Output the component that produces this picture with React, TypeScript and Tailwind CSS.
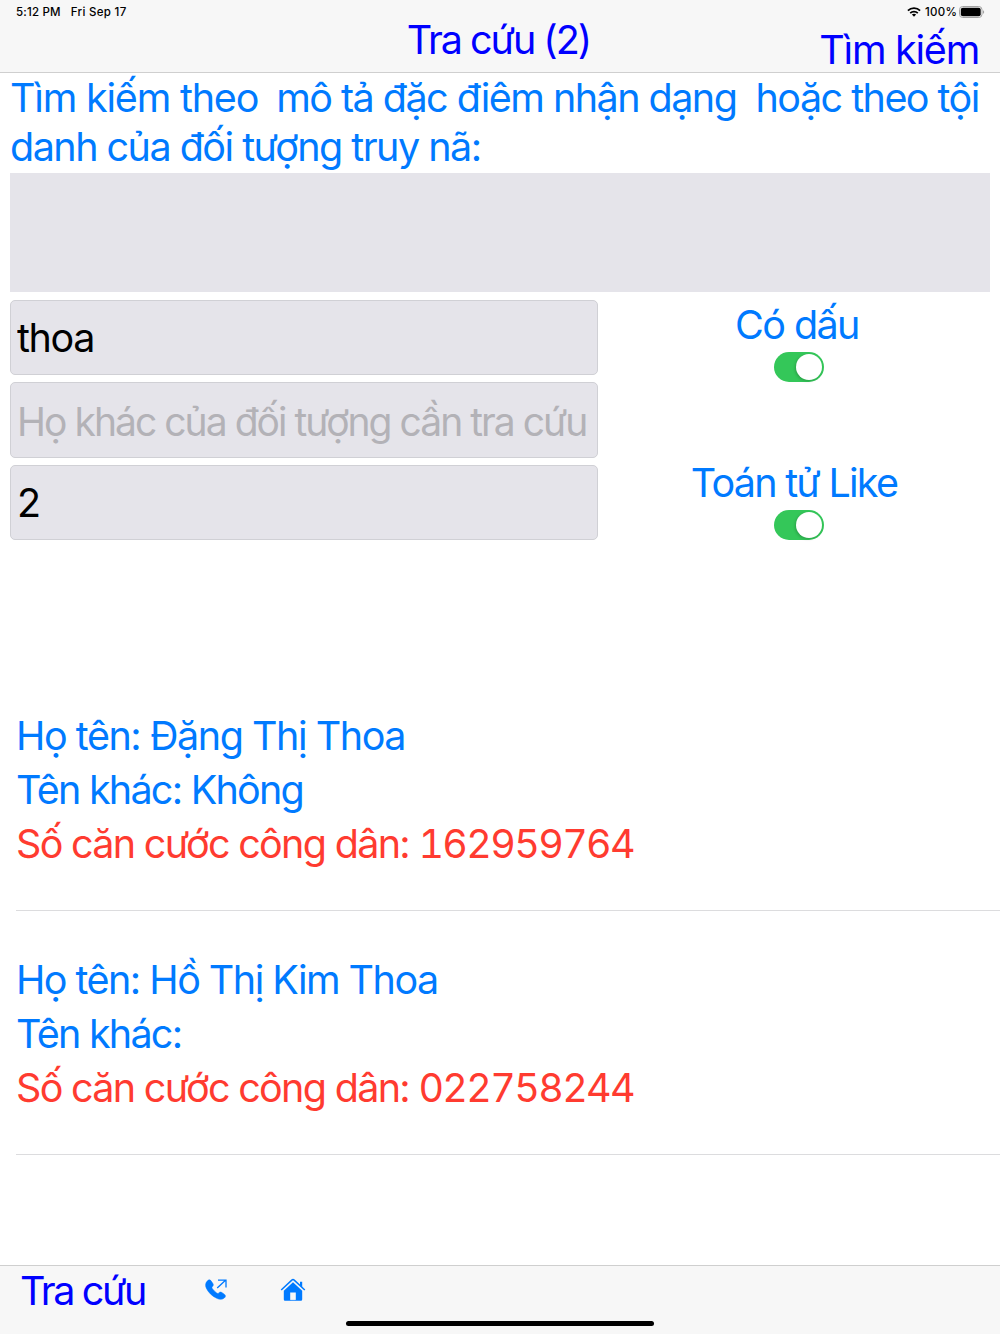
import { useState } from 'react'
import clsx from 'clsx'

interface Suspect {
  name: string
  nameClass: string
  alias: string
  idNumber: string
}

const suspects: Suspect[] = [
  {
    name: 'Đặng Thị Thoa',
    nameClass: 'tracking-[-1.45px]',
    alias: 'Không',
    idNumber: '162959764'
  },
  {
    name: 'Hồ Thị Kim Thoa',
    nameClass: 'tracking-[-1.53px]',
    alias: '',
    idNumber: '022758244'
  }
]

interface ToggleProps {
  label: string
  labelClass: string
}

function Toggle({ label, labelClass }: ToggleProps) {
  const [on, setOn] = useState(true)

  return (
    <div className="flex flex-col items-center">
      <span className={clsx('h-[49px] whitespace-nowrap leading-[51px] text-[#007aff]', labelClass)}>{label}</span>
      <button
        type="button"
        role="switch"
        aria-checked={on}
        aria-label={label}
        onClick={() => setOn(!on)}
        className={clsx(
          'ml-px mt-[3px] flex h-[30px] w-[50px] items-center rounded-full px-[2px]',
          on ? 'justify-end bg-[#34c759]' : 'justify-start bg-[#e5e5ea]'
        )}
      >
        <span className="size-[26px] rounded-full bg-white shadow-[-1px_1px_3px_rgba(0,0,0,0.2)]" />
      </button>
    </div>
  )
}

interface FieldProps {
  initial?: string
  placeholder?: string
  className: string
}

function Field({ initial = '', placeholder, className }: FieldProps) {
  const [value, setValue] = useState(initial)

  return (
    <input
      value={value}
      placeholder={placeholder}
      onChange={e => setValue(e.target.value)}
      className={clsx(
        'block w-full rounded-[5px] border border-[#d0d0d5] bg-[#e5e4ea] px-[6px] text-black placeholder:text-[#b3b2b7] outline-none',
        className
      )}
    />
  )
}

function StatusIcons() {
  return (
    <div className="flex items-center">
      <svg className="-mt-px h-[10px] w-[14px]" viewBox="0 0 14 10" fill="none" stroke="#000" strokeWidth="1.7">
        <path d="M.9 3.7C4.2.3 9.8.3 13.1 3.7" />
        <path d="M3.2 6.1c2.1-2.1 5.5-2.1 7.6 0" />
        <path d="M7 9.7 4.9 7.6c1.2-1.1 3-1.1 4.2 0z" fill="#000" stroke="none" />
      </svg>
      <span className="ml-[4px] w-[32px] whitespace-nowrap tracking-[0.3px]">100%</span>
      <svg className="-mt-[2px] ml-[2px] h-[12px] w-[26px]" viewBox="0 0 26 12">
        <rect x=".5" y=".5" width="22.5" height="11" rx="3.2" fill="none" stroke="#a3a3a3" />
        <rect x="1.8" y="1.8" width="19.9" height="8.4" rx="2" fill="#000" />
        <path d="M24 4.2c1.6.5 1.6 3.1 0 3.6z" fill="#a3a3a3" />
      </svg>
    </div>
  )
}

export default function App() {
  return (
    <div className="flex h-[1334px] w-[1000px] flex-col overflow-hidden bg-white font-['Inter',sans-serif] text-[39.5px]">
      <header className="h-[73px] shrink-0 border-b border-[#cfcfcf] bg-[#f7f7f7]">
        <div className="flex h-[24px] items-center justify-between pl-[16px] pr-[15px] pt-px text-[11.5px] font-medium text-black">
          <div className="flex gap-[10px]">
            <span className="tracking-[0.2px]">5:12 PM</span>
            <span className="tracking-[0.3px]">Fri Sep 17</span>
          </div>
          <StatusIcons />
        </div>
        <div className="grid grid-cols-[1fr_auto_1fr] text-[#0000ff]">
          <span className="col-start-2 -mt-[9px] h-[49px] pr-[3px] leading-[51px] tracking-[-2.05px]">Tra cứu (2)</span>
          <button type="button" className="mt-px h-[47px] justify-self-end pr-[21px] leading-[51px] tracking-[-1.25px]">
            Tìm kiếm
          </button>
        </div>
      </header>

      <main className="flex-1">
        {/* Search form */}
        <section className="px-[10px]">
          <div className="h-[100px] whitespace-pre pt-px leading-[49px] text-[#007aff]">
            <p>
              <span className="tracking-[-1.2px]">Tìm kiếm theo </span>
              <span className="tracking-[-3px]"> </span>
              <span className="tracking-[-1.53px]">mô tả đặc điêm nhận dạng  hoặc theo tội</span>
            </p>
            <p className="tracking-[-1.52px]">danh của đối tượng truy nã:</p>
          </div>
          <textarea className="block h-[119px] w-full resize-none bg-[#e5e4ea] p-2 outline-none" />
          <div className="mt-[8px] flex">
            <div className="flex w-[588px] flex-col gap-[7px]">
              <Field initial="thoa" className="h-[75px] tracking-[-1.4px]" />
              <Field
                placeholder="Họ khác của đối tượng cần tra cứu"
                className="h-[76px] pt-[2px] text-[39px] tracking-[-1.96px]"
              />
              <Field initial="2" className="h-[75px]" />
            </div>
            <div className="ml-[8px] flex w-[384px] flex-col gap-[76px]">
              <Toggle label="Có dấu" labelClass="pr-[2px] tracking-[-1.6px]" />
              <Toggle label="Toán tử Like" labelClass="pr-[8px] tracking-[-1.75px]" />
            </div>
          </div>
        </section>

        {/* Results */}
        <ul className="mt-[127px] pl-[16px]">
          {suspects.map(s => (
            <li
              key={s.idNumber}
              className="h-[244px] whitespace-nowrap border-b border-[#dcdcde] pt-[42px] leading-[54px] text-[#007aff]"
            >
              <p className={s.nameClass}>Họ tên: {s.name}</p>
              <p className="tracking-[-1.75px]">Tên khác: {s.alias}</p>
              <p className="text-[#ff3b30] tracking-[-1.7px]">
                Số căn cước công dân: <span className="tabular-nums tracking-[-1.65px]">{s.idNumber}</span>
              </p>
            </li>
          ))}
        </ul>
      </main>

      <footer className="flex h-[69px] shrink-0 flex-col border-t border-[#cfcfcf] bg-[#f7f7f7]">
        <div className="flex h-[49px] items-center pl-[20px]">
          <button type="button" className="h-[49px] w-[185px] text-left leading-[51px] tracking-[-2.4px] text-[#0000ff]">
            Tra cứu
          </button>
          <button type="button" aria-label="Gọi" className="text-[#007aff]">
            <svg className="-mt-px h-[22px] w-[22px]" viewBox="0 0 22 22" fill="none" stroke="currentColor">
              <path
                d="M2.2 2.1C3.6.4 5.2.5 6.2 2L7.9 4.6c.7 1.2.5 2.1-.4 3-.7.8-.7 1.2-.1 2.1 1.2 1.7 2.6 3.100 4.300 4.300.9.6 1.400.6 2.100-.1.9-.9 1.800-1.100 3-.4l2.500 1.700c1.600 1.100 1.500 2.600-.1 3.900-2.100 1.700-4.700 1.600-7.500.2C6.900 17 3.300 13.300 1.300 9.200.1 6.600.4 4.100 2.200 2.100z"
                fill="currentColor"
                strokeWidth=".5"
              />
              <path d="M12.2 9 20.5 1.2M13 1.1h8v7.5" strokeWidth="1.3" />
            </svg>
          </button>
          <button type="button" aria-label="Trang chủ" className="ml-[53px] text-[#007aff]">
            <svg className="-mt-px h-[24px] w-[26px]" viewBox="0 0 26 24" fill="none" stroke="currentColor">
              <path d="M1.2 12 11.8 2.1c.8-.7 1.6-.7 2.4 0L24.8 12" strokeWidth="1.5" />
              <path d="M20 3.8h2.2v5.8L20 7.5z" fill="currentColor" stroke="none" />
              <path
                d="M13 4.300 22.200 12.700v8.500c0 1-.7 1.600-1.600 1.600h-4.800v-8.300h-5.600v8.300H5.400c-.9 0-1.600-.6-1.600-1.600v-8.500z"
                fill="currentColor"
                stroke="none"
              />
              <path d="M10 22.4h6" strokeWidth=".8" />
            </svg>
          </button>
        </div>
        <div className="ml-[346px] mt-[6px] h-[5px] w-[308px] rounded-full bg-black" />
      </footer>
    </div>
  )
}
